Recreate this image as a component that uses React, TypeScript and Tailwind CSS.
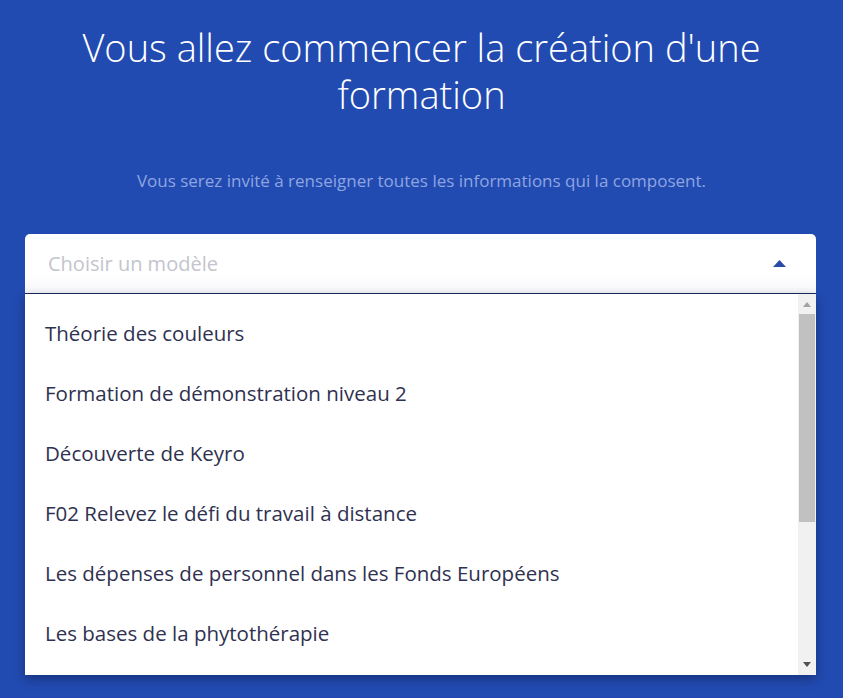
const ITEMS = [
  'Théorie des couleurs',
  'Formation de démonstration niveau 2',
  'Découverte de Keyro',
  'F02 Relevez le défi du travail à distance',
  'Les dépenses de personnel dans les Fonds Européens',
  'Les bases de la phytothérapie',
]

function Scrollbar() {
  return (
    <div className="flex w-[18px] shrink-0 flex-col bg-[#f1f1f1]">
      <div className="flex h-[20px] items-center justify-center">
        <svg width="8" height="5" viewBox="0 0 8 5">
          <path d="M0 5 L4 0 L8 5 Z" fill="#a3a3a3" />
        </svg>
      </div>
      <div className="mx-[1px] h-[208px] bg-[#c1c1c1]" />
      <div className="flex-1" />
      <div className="flex h-[22px] items-center justify-center">
        <svg width="8" height="5" viewBox="0 0 8 5">
          <path d="M0 0 L8 0 L4 5 Z" fill="#505050" />
        </svg>
      </div>
    </div>
  )
}

export default function App() {
  return (
    <div
      className="h-[698px] w-full overflow-hidden bg-[#224bb1] px-[25px] pt-[24px]"
      style={{ fontFamily: '"Open Sans", "Noto Sans", sans-serif' }}
    >
      <h1 className="mx-auto max-w-[780px] text-center text-[38px] font-light leading-[47px] text-white">
        Vous allez commencer la création d'une formation
      </h1>
      <p className="mt-[51px] text-center text-[17px] leading-[24px] text-[#8ea5e2]">
        Vous serez invité à renseigner toutes les informations qui la composent.
      </p>

      <div className="mt-[41px] w-[791px]">
        <div className="flex h-[60px] items-center justify-between rounded-t-[5px] border-b border-[#1c2b5e] bg-gradient-to-b from-white from-70% to-[#f6f7fa] pl-[23px] pr-[30px]">
          <span className="text-[20px] text-[#c3c4cc]">Choisir un modèle</span>
          <svg width="13" height="7" viewBox="0 0 13 7">
            <path d="M0 7 L6.5 0 L13 7 Z" fill="#2a4aa6" />
          </svg>
        </div>

        <div className="flex h-[381px] bg-white shadow-[0_4px_10px_rgba(10,20,60,0.45)]">
          <ul className="flex-1 overflow-hidden pt-[9px]">
            {ITEMS.map((item) => (
              <li
                key={item}
                className="flex h-[60px] items-center pl-[20px] text-[20.5px] text-[#2f3150]"
              >
                {item}
              </li>
            ))}
          </ul>
          <Scrollbar />
        </div>
      </div>
    </div>
  )
}
